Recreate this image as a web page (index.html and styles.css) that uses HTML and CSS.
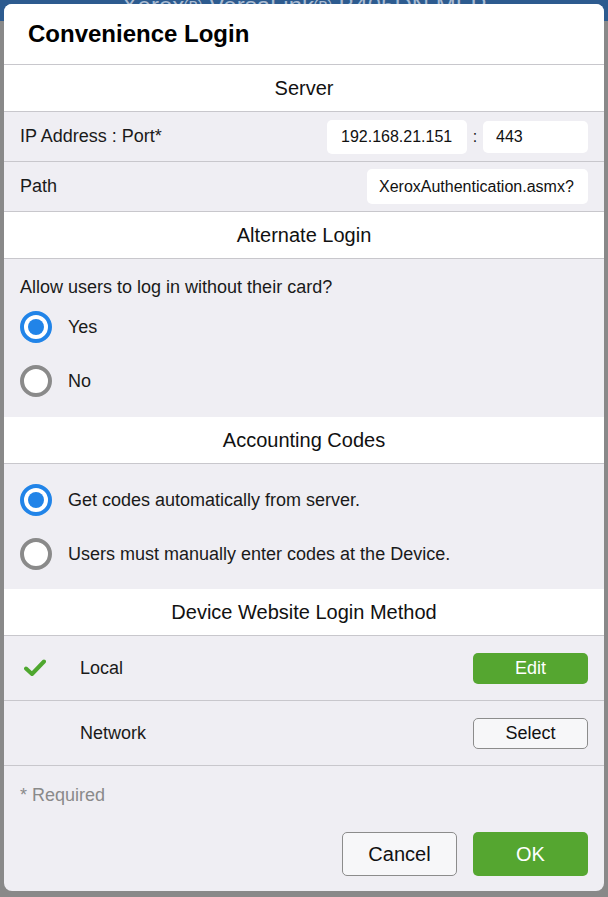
FILE: index.html
```html
<!DOCTYPE html>
<html lang="en">
<head>
    <meta charset="UTF-8">
    <meta name="viewport" content="width=device-width, initial-scale=1.0">
    <title>Convenience Login</title>
    <link rel="stylesheet" href="styles.css">
</head>
<body>
    <div class="backdrop">
        <div class="topbar"><span>Xerox&reg; VersaLink&reg; B405DN MFP</span></div>
    </div>

    <div class="modal">
        <div class="modal-title">Convenience Login</div>

        <div class="section-head">Server</div>
        <div class="row">
            <span class="row-label">IP Address : Port*</span>
            <div class="field-group">
                <input type="text" class="field field-ip" value="192.168.21.151">
                <span class="colon">:</span>
                <input type="text" class="field field-port" value="443">
            </div>
        </div>
        <div class="row">
            <span class="row-label">Path</span>
            <input type="text" class="field field-path" value="XeroxAuthentication.asmx?">
        </div>

        <div class="section-head">Alternate Login</div>
        <div class="options">
            <div class="question">Allow users to log in without their card?</div>
            <div class="option">
                <span class="radio checked"></span>
                <span>Yes</span>
            </div>
            <div class="option">
                <span class="radio"></span>
                <span>No</span>
            </div>
        </div>

        <div class="section-head">Accounting Codes</div>
        <div class="options options-top">
            <div class="option">
                <span class="radio checked"></span>
                <span>Get codes automatically from server.</span>
            </div>
            <div class="option">
                <span class="radio"></span>
                <span>Users must manually enter codes at the Device.</span>
            </div>
        </div>

        <div class="section-head">Device Website Login Method</div>
        <div class="method-row">
            <span class="check">
                <svg width="22" height="18" viewBox="0 0 22 18">
                    <path d="M2 9.5 L8 15 L20 2.5" fill="none" stroke="#4fa72f" stroke-width="4" stroke-linecap="round" stroke-linejoin="round"/>
                </svg>
            </span>
            <span class="method-name">Local</span>
            <button class="btn btn-green btn-small">Edit</button>
        </div>
        <div class="method-row">
            <span class="check"></span>
            <span class="method-name">Network</span>
            <button class="btn btn-plain btn-small">Select</button>
        </div>

        <div class="modal-foot">
            <div class="required">* Required</div>
            <div class="foot-buttons">
                <button class="btn btn-plain btn-large">Cancel</button>
                <button class="btn btn-green btn-large">OK</button>
            </div>
        </div>
    </div>
</body>
</html>
```

FILE: styles.css
```css
body {
    font-family: "Liberation Sans", Arial, sans-serif;
    background-color: #898989;
    margin: 0;
    padding: 0;
    color: #1a1a1a;
}

.backdrop {
    height: 897px;
    overflow: hidden;
}

.topbar {
    height: 21px;
    background-color: #2d5b8f;
    text-align: center;
    overflow: hidden;
}

.topbar span {
    display: block;
    margin-top: -8px;
    font-size: 24px;
    line-height: 28px;
    color: #a9bbd2;
}

.modal {
    position: absolute;
    top: 4px;
    left: 4px;
    width: 600px;
    height: 887px;
    background-color: #efeef3;
    border-radius: 8px;
    overflow: hidden;
}

.modal-title {
    height: 60px;
    display: flex;
    align-items: center;
    padding-left: 24px;
    background-color: #fff;
    border-bottom: 1px solid #c8c7cc;
    font-size: 24px;
    font-weight: bold;
    color: #000;
}

.section-head {
    height: 46px;
    display: flex;
    align-items: center;
    justify-content: center;
    background-color: #fff;
    border-bottom: 1px solid #c8c7cc;
    font-size: 20px;
    color: #111;
}

.row {
    height: 49px;
    display: flex;
    align-items: center;
    justify-content: space-between;
    padding: 0 16px;
    border-bottom: 1px solid #c8c7cc;
    font-size: 18px;
}

.field-group {
    display: flex;
    align-items: center;
}

.field {
    box-sizing: border-box;
    height: 34px;
    border: none;
    border-radius: 5px;
    background-color: #fff;
    padding: 0 0 0 13px;
    font-family: "Liberation Sans", Arial, sans-serif;
    font-size: 16px;
    color: #111;
    outline: none;
}

.field-ip {
    width: 140px;
    padding-left: 14px;
}

.field-port {
    width: 105px;
    height: 32px;
}

.field-path {
    width: 221px;
    height: 35px;
    padding-left: 12px;
}

.colon {
    width: 16px;
    text-align: center;
    font-size: 16px;
}

.options {
    padding: 17px 16px 9px;
    font-size: 18px;
}

.options-top {
    padding-top: 9px;
    padding-bottom: 8px;
}

.question {
    line-height: 22px;
    margin-bottom: 2px;
}

.option {
    height: 54px;
    display: flex;
    align-items: center;
}

.radio {
    box-sizing: border-box;
    width: 32px;
    height: 32px;
    border: 4px solid #8a8a8a;
    border-radius: 50%;
    margin-right: 16px;
    display: flex;
    align-items: center;
    justify-content: center;
    background-color: #fff;
}

.radio.checked {
    border-color: #2184e8;
}

.radio.checked::after {
    content: "";
    width: 16px;
    height: 16px;
    border-radius: 50%;
    background-color: #2184e8;
}

.method-row {
    height: 64px;
    display: flex;
    align-items: center;
    padding: 0 16px 0 20px;
    border-bottom: 1px solid #c8c7cc;
    font-size: 18px;
}

.check {
    width: 56px;
    display: flex;
    align-items: center;
}

.method-name {
    flex: 1;
}

.btn {
    box-sizing: border-box;
    font-family: "Liberation Sans", Arial, sans-serif;
    border-radius: 5px;
    cursor: pointer;
    padding: 0;
}

.btn-small {
    width: 115px;
    height: 31px;
    font-size: 18px;
}

.btn-large {
    width: 115px;
    height: 44px;
    font-size: 20px;
}

.btn-green {
    background-color: #55a630;
    border: none;
    color: #fff;
}

.btn-plain {
    background-color: #f7f7f9;
    border: 1px solid #8c8c8c;
    color: #111;
}

.modal-foot {
    padding: 18px 16px 15px;
}

.required {
    font-size: 18px;
    line-height: 22px;
    color: #8a8a8a;
}

.foot-buttons {
    display: flex;
    justify-content: flex-end;
    gap: 16px;
    margin-top: 26px;
}
```
